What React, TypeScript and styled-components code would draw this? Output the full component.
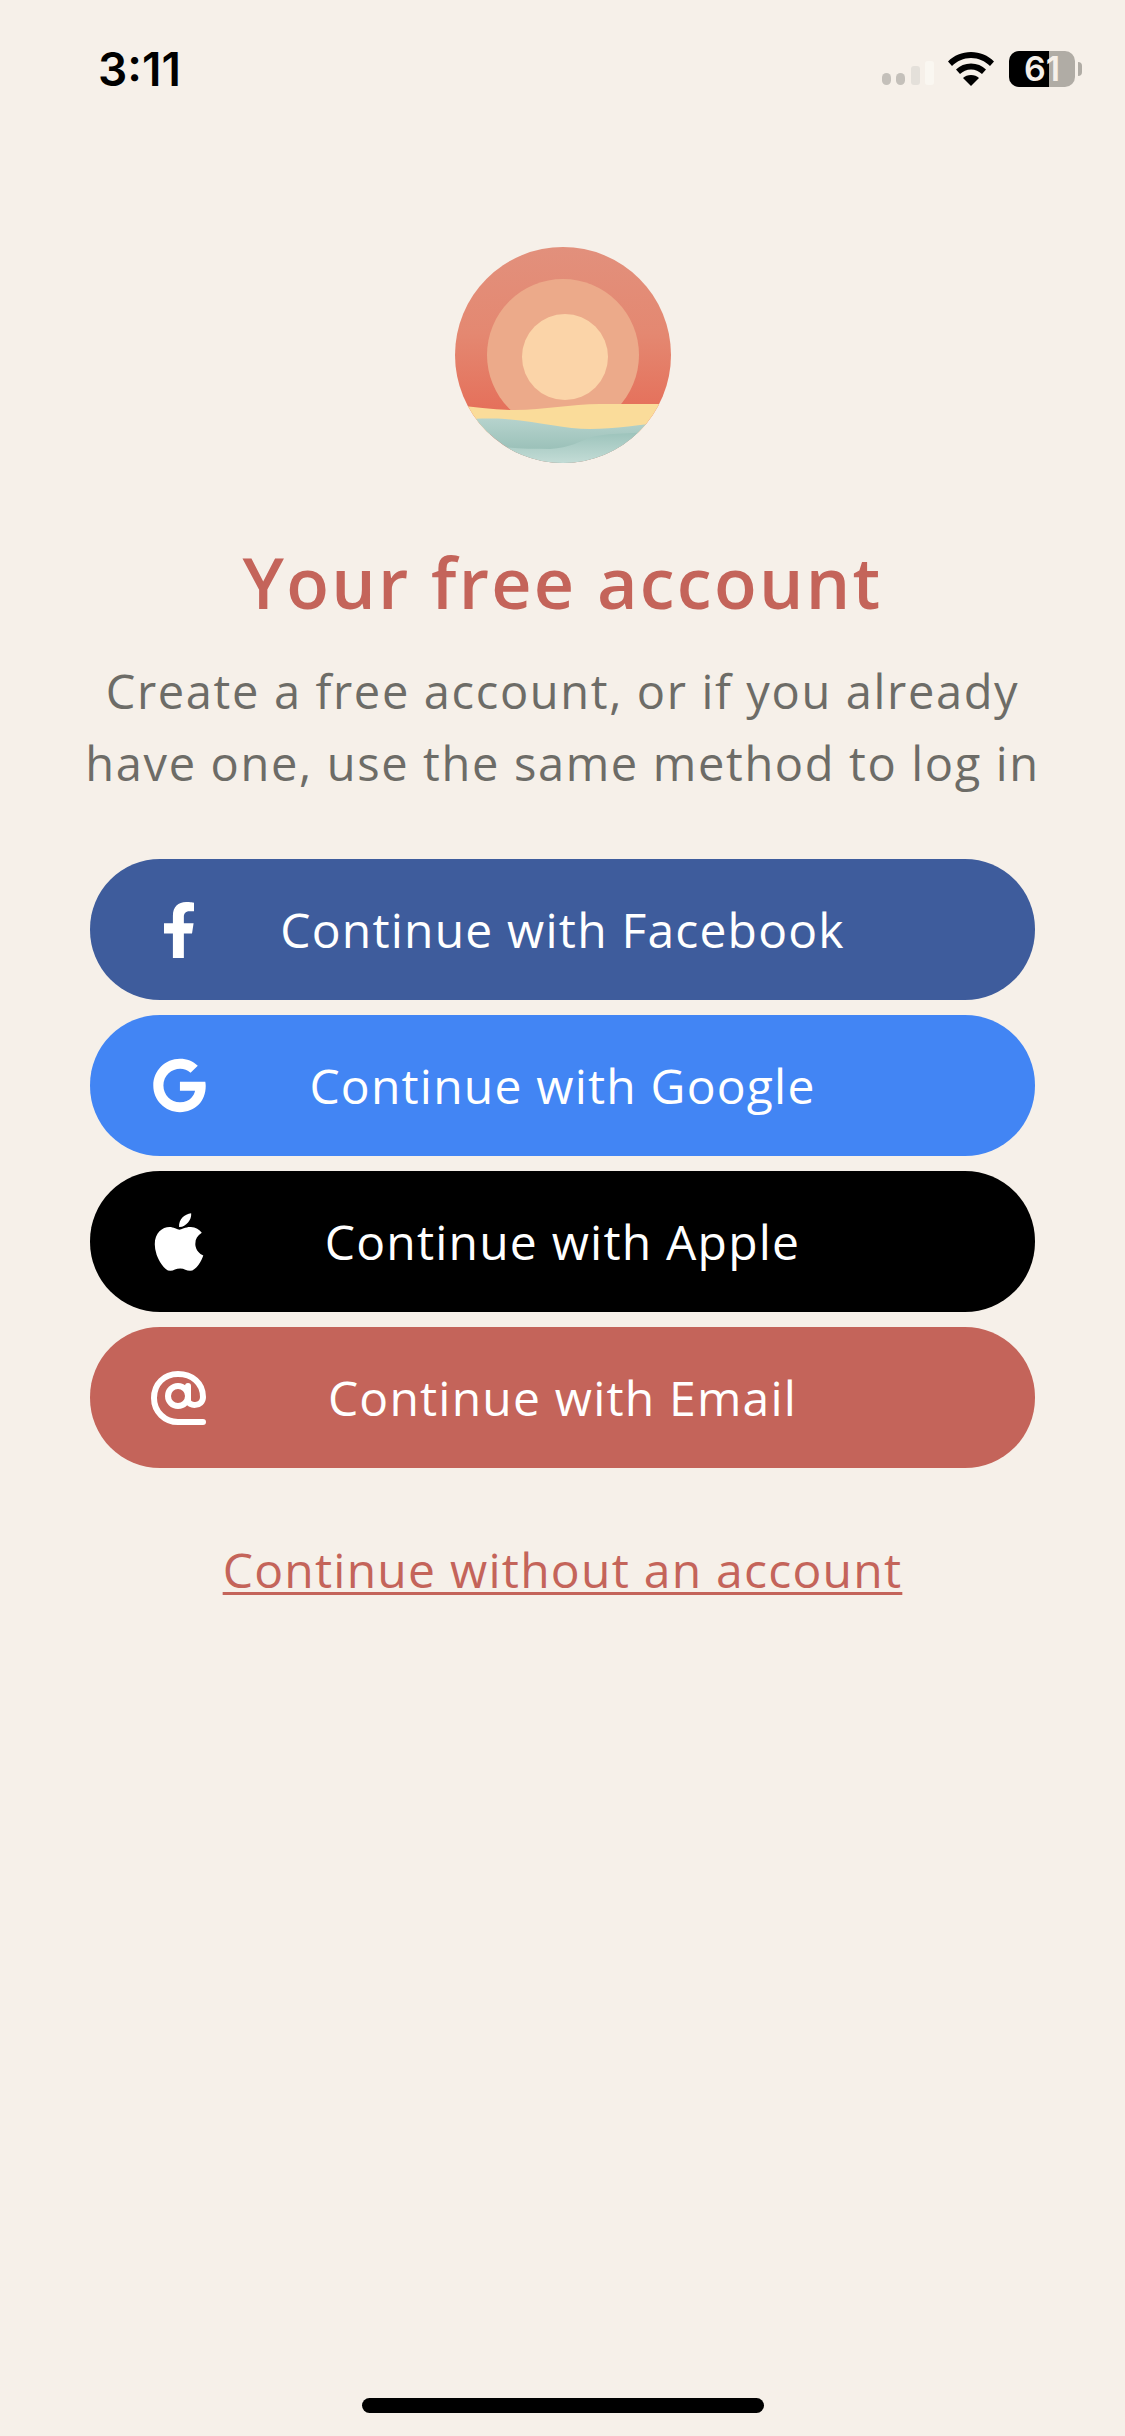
import styled, { createGlobalStyle } from "styled-components";
import { FaApple, FaFacebookF, FaGoogle } from "react-icons/fa";
import { ReactNode } from "react";

const GlobalStyle = createGlobalStyle`
  html, body {
    margin: 0;
    padding: 0;
    background: #f6f0e9;
  }
`;

const Screen = styled.div`
  width: 1125px;
  height: 2436px;
  background: #f6f0e9;
  display: flex;
  flex-direction: column;
  align-items: center;
  font-family: "Open Sans", "Noto Sans", sans-serif;
  overflow: hidden;
`;

const StatusBar = styled.div`
  width: 100%;
  height: 247px;
  box-sizing: border-box;
  padding: 47px 43px 0 98px;
  display: flex;
  justify-content: space-between;
  align-items: flex-start;
`;

const Time = styled.div`
  font-family: Inter, "Liberation Sans", sans-serif;
  font-weight: 600;
  font-size: 46px;
  line-height: 45px;
  letter-spacing: 0;
  color: #000;
`;

const StatusIcons = styled.div`
  display: flex;
  align-items: center;
  padding-top: 4px;
`;

const SignalIcon = styled.svg`
  width: 52px;
  height: 36px;
  margin-right: 14px;
`;

const WifiIcon = styled.svg`
  width: 46px;
  height: 34px;
  margin-right: 15px;
`;

const Battery = styled.div`
  position: relative;
  width: 66px;
  height: 36px;
  border-radius: 10px;
  background: #b0aca5;
  display: flex;
  align-items: center;
  justify-content: center;
`;

const BatteryFill = styled.div`
  position: absolute;
  left: 0;
  top: 0;
  bottom: 0;
  border-radius: 10px 0 0 10px;
  background: #000;
`;

const BatteryLabel = styled.span`
  position: relative;
  font-family: Inter, "Liberation Sans", sans-serif;
  font-weight: 600;
  font-size: 34px;
  line-height: 36px;
  color: #f6f0e9;
`;

const BatteryCap = styled.div`
  width: 4px;
  height: 14px;
  margin-left: 3px;
  border-radius: 0 4px 4px 0;
  background: #b0aca5;
`;

const Logo = styled.svg`
  width: 216px;
  height: 216px;
  display: block;
  flex-shrink: 0;
`;

const Title = styled.h1`
  margin: 71px 0 0;
  font-size: 70px;
  line-height: 96px;
  font-weight: 600;
  letter-spacing: 2.3px;
  color: #c4645a;
`;

const Description = styled.p`
  margin: 25px 0 0;
  font-size: 47px;
  line-height: 72px;
  font-weight: 400;
  letter-spacing: 1.65px;
  color: #6d6c67;
  text-align: center;
  white-space: nowrap;
`;

const ButtonList = styled.div`
  width: 945px;
  margin-top: 60px;
  display: flex;
  flex-direction: column;
  gap: 15px;
`;

const AuthButton = styled.button<{ $bg: string }>`
  width: 100%;
  height: 141px;
  border: none;
  border-radius: 70px;
  padding: 0;
  background: ${(p) => p.$bg};
  color: #fff;
  display: grid;
  grid-template-columns: 1fr auto 1fr;
  align-items: center;
  font-family: inherit;
  font-size: 48px;
  font-weight: 400;
  letter-spacing: 1.2px;
`;

const IconSlot = styled.span`
  width: 120px;
  margin-left: 29px;
  display: flex;
  align-items: center;
  justify-content: center;
`;

const GuestLink = styled.a`
  margin-top: 69px;
  font-size: 48px;
  line-height: 66px;
  font-weight: 400;
  letter-spacing: 1.25px;
  color: #c4645a;
  text-decoration: underline;
  text-decoration-thickness: 3px;
  text-decoration-skip-ink: none;
  text-underline-offset: 4px;
`;

const HomeIndicator = styled.div`
  width: 402px;
  height: 15px;
  margin-top: auto;
  margin-bottom: 23px;
  border-radius: 8px;
  background: #000;
`;

const AtIcon = () => (
  <svg width="56" height="54" viewBox="0 0 56 54" fill="none" stroke="#fff" strokeWidth="6" strokeLinecap="round">
    <circle cx="27" cy="25" r="10" />
    <path d="M37 15v14c0 7 15 7 15-3C52 12 41 3 27 3 13 3 3 13 3 27s11 24 24 24h25" />
  </svg>
);

interface IProvider {
  label: string;
  color: string;
  icon: ReactNode;
}

const providers: IProvider[] = [
  { label: "Continue with Facebook", color: "#3e5c9c", icon: <FaFacebookF size={56} color="#fff" /> },
  { label: "Continue with Google", color: "#4285f4", icon: <FaGoogle size={55} color="#fff" /> },
  { label: "Continue with Apple", color: "#000", icon: <FaApple size={66} color="#fff" /> },
  { label: "Continue with Email", color: "#c4645a", icon: <AtIcon /> },
];

const App = () => {
  return (
    <Screen>
      <GlobalStyle />
      <StatusBar>
        <Time>3:11</Time>
        <StatusIcons>
          <SignalIcon viewBox="0 0 52 36">
            <rect x="0" y="22" width="9" height="12" rx="4.5" fill="#c4c0ba" />
            <rect x="14" y="22" width="9" height="12" rx="4.5" fill="#c4c0ba" />
            <rect x="29" y="15" width="9" height="19" rx="3" fill="#e4e0da" />
            <rect x="43" y="10" width="9" height="24" rx="3" fill="#faf7f1" />
          </SignalIcon>
          <WifiIcon viewBox="0 0 46 34">
            <path d="M23 0C14 0 6 3.500 0 9.500l4 4.500C9 9 15.500 6 23 6s14 3 19 8l4-4.500C40 3.500 32 0 23 0z" />
            <path d="M23 11.500c-6 0-11 2.300-15 6l4 4.500c3-2.700 6.700-4.500 11-4.500s8 1.800 11 4.500l4-4.500c-4-3.700-9-6-15-6z" />
            <path d="M23 23c-3.200 0-6 1.200-8 3l8 8 8-8c-2-1.800-4.800-3-8-3z" />
          </WifiIcon>
          <Battery>
            <BatteryFill style={{ width: "61%" }} />
            <BatteryLabel>61</BatteryLabel>
          </Battery>
          <BatteryCap />
        </StatusIcons>
      </StatusBar>

      <Logo viewBox="0 0 216 216">
        <defs>
          <clipPath id="logo-clip">
            <circle cx="108" cy="108" r="108" />
          </clipPath>
          <linearGradient id="logo-sky" x1="0" y1="0" x2="0" y2="1">
            <stop offset="0" stopColor="#e2907c" />
            <stop offset="0.4" stopColor="#e48871" />
            <stop offset="0.8" stopColor="#e56d58" />
          </linearGradient>
          <linearGradient id="logo-sea" x1="0" y1="0" x2="0" y2="1">
            <stop offset="0" stopColor="#b6d3cd" />
            <stop offset="1" stopColor="#8fb9b0" />
          </linearGradient>
          <linearGradient id="logo-foam" x1="0" y1="0" x2="0" y2="1">
            <stop offset="0" stopColor="#9cc3bb" />
            <stop offset="1" stopColor="#c3dcd6" />
          </linearGradient>
        </defs>
        <g clipPath="url(#logo-clip)">
          <rect width="216" height="216" fill="url(#logo-sky)" />
          <circle cx="108" cy="108" r="76" fill="#ecaa8a" />
          <circle cx="110" cy="110" r="43" fill="#fbd4a8" />
          <path d="M0 158C20 160 40 163 60 163c30 0 55-6 85-6 20 0 45 0 71 0v30H0z" fill="#fadc9a" />
          <path d="M0 173c15-1 35-2 50-1 35 3 60 10 85 10 25 0 50-4 81-8v42H0z" fill="url(#logo-sea)" />
          <path d="M30 197c15 4 40 5 65 5 20-1 30-8 42-12 15-4 40-4 79-5v31H30z" fill="url(#logo-foam)" />
        </g>
      </Logo>

      <Title>Your free account</Title>
      <Description>
        Create a free account, or if you already
        <br />
        have one, use the same method to log in
      </Description>

      <ButtonList>
        {providers.map((provider) => (
          <AuthButton key={provider.label} $bg={provider.color}>
            <IconSlot>{provider.icon}</IconSlot>
            <span>{provider.label}</span>
          </AuthButton>
        ))}
      </ButtonList>

      <GuestLink href="#">Continue without an account</GuestLink>
      <HomeIndicator />
    </Screen>
  );
};

export default App;
